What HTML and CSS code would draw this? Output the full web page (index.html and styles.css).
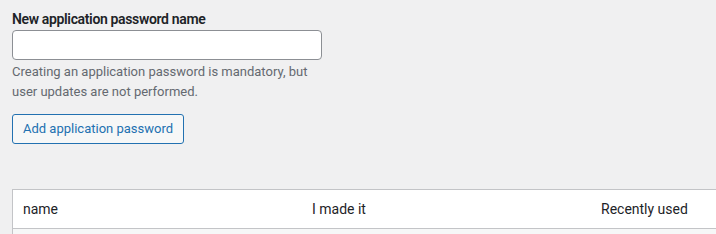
FILE: index.html
```html
<!DOCTYPE html>
<html lang="en">
<head>
<meta charset="utf-8">
<title>Application passwords</title>
<link rel="stylesheet" href="styles.css">
</head>
<body>
<div class="page">
  <div class="form-field">
    <label class="field-label" for="app-name">New application password name</label>
    <input class="text-input" id="app-name" type="text">
    <p class="description">Creating an application password is mandatory, but<br>user updates are not performed.</p>
  </div>
  <button class="button" type="button">Add application password</button>
  <div class="list-table">
    <div class="thead">
      <div class="th">name</div>
      <div class="th">I made it</div>
      <div class="th">Recently used</div>
    </div>
    <div class="tbody-row"></div>
  </div>
</div>
</body>
</html>
```
FILE: styles.css
```css
html, body {
  margin: 0;
  padding: 0;
  background: #f0f0f1;
  overflow: hidden;
}
body {
  width: 716px;
  height: 234px;
  font-family: Roboto, "Noto Sans", sans-serif;
  color: #1d2327;
}
.page {
  box-sizing: border-box;
  width: 716px;
  height: 234px;
  overflow: hidden;
  padding: 9px 0 0 12px;
}
.form-field {
  display: flex;
  flex-direction: column;
  align-items: flex-start;
}
.field-label {
  font-size: 14px;
  font-weight: 600;
  line-height: 20px;
  letter-spacing: -0.35px;
  margin-bottom: 1px;
}
.text-input {
  box-sizing: border-box;
  width: 310px;
  height: 30px;
  margin: 0;
  border: 1px solid #8c8f94;
  border-radius: 4px;
  background: #fff;
  padding: 0 8px;
  font: inherit;
}
.description {
  margin: 2px 0 0;
  font-size: 13px;
  line-height: 19.5px;
  color: #646970;
}
.button {
  box-sizing: border-box;
  display: block;
  margin-top: 13px;
  height: 30px;
  padding: 0 10px;
  border: 1px solid #2271b1;
  border-radius: 3px;
  background: #f6f7f7;
  color: #2271b1;
  font-family: inherit;
  font-size: 13px;
  line-height: 28px;
  cursor: pointer;
}
.list-table {
  margin-top: 45px;
  width: 740px;
  border: 1px solid #c3c4c7;
  background: #fff;
}
.thead {
  display: grid;
  grid-template-columns: 289px 289px 1fr;
  height: 38px;
  border-bottom: 1px solid #c3c4c7;
  align-items: center;
}
.th {
  padding: 0 10px;
  font-size: 14px;
  line-height: 20px;
}
.tbody-row {
  height: 6px;
  background: #f6f7f7;
}
```
